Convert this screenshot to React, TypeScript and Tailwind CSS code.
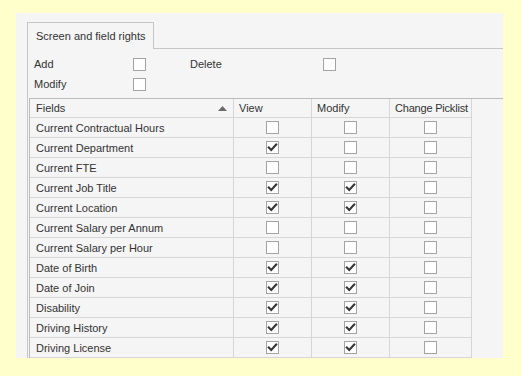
const rows: { name: string; view: boolean; modify: boolean; picklist: boolean }[] = [
  { name: 'Current Contractual Hours', view: false, modify: false, picklist: false },
  { name: 'Current Department', view: true, modify: false, picklist: false },
  { name: 'Current FTE', view: false, modify: false, picklist: false },
  { name: 'Current Job Title', view: true, modify: true, picklist: false },
  { name: 'Current Location', view: true, modify: true, picklist: false },
  { name: 'Current Salary per Annum', view: false, modify: false, picklist: false },
  { name: 'Current Salary per Hour', view: false, modify: false, picklist: false },
  { name: 'Date of Birth', view: true, modify: true, picklist: false },
  { name: 'Date of Join', view: true, modify: true, picklist: false },
  { name: 'Disability', view: true, modify: true, picklist: false },
  { name: 'Driving History', view: true, modify: true, picklist: false },
  { name: 'Driving License', view: true, modify: true, picklist: false },
];

function CheckBox({ checked = false }: { checked?: boolean }) {
  return (
    <div className="w-[13px] h-[13px] border border-[#a3a3a3] bg-white flex items-center justify-center shrink-0">
      {checked && (
        <svg width="11" height="11" viewBox="0 0 11 11" fill="none">
          <path d="M1.8 5.6L4.2 8L9.2 2.6" stroke="#363636" strokeWidth="2.1" strokeLinecap="square" />
        </svg>
      )}
    </div>
  );
}

export default function App() {
  return (
    <div
      className="w-[521px] h-[376px] bg-[#ffffcc] pt-[13px] pl-[16px] text-[11px] text-[#333333]"
      style={{ fontFamily: '"Liberation Sans", Arial, sans-serif' }}
    >
      <div className="w-[487px] h-[345px] bg-[#f5f5f5] overflow-hidden flex flex-col">
        {/* tab strip */}
        <div className="flex items-end pl-[11px] pt-[9px]">
          <div className="w-[127px] h-[27px] border border-b-0 border-[#c6c6c6] pl-[8px] pt-[1px] flex items-center">
            Screen and field rights
          </div>
          <div className="flex-1 border-b border-[#c6c6c6]" />
        </div>

        {/* tab page */}
        <div className="ml-[11px] flex-1 border-l border-[#c6c6c6] pt-[5px]">
          <div className="flex items-center h-[20px] pl-[6px]">
            <span className="w-[99px]">Add</span>
            <CheckBox />
            <span className="ml-[44px] w-[133px]">Delete</span>
            <CheckBox />
          </div>
          <div className="flex items-center h-[20px] pl-[6px]">
            <span className="w-[99px]">Modify</span>
            <CheckBox />
          </div>

          {/* grid */}
          <div className="mt-[4px] ml-[1px] border-t border-l border-[#bcbcbc]">
            <div className="flex h-[19px]">
              <div className="w-[204px] border-r border-b border-[#d6d6d6] pl-[6px] pr-[6px] pt-[1px] flex items-center justify-between">
                <span>Fields</span>
                <svg width="9" height="5" viewBox="0 0 9 5">
                  <path d="M0 5L4.5 0L9 5Z" fill="#6b6b6b" />
                </svg>
              </div>
              <div className="w-[78px] border-r border-b border-[#d6d6d6] pl-[5px] pt-[1px] flex items-center">View</div>
              <div className="w-[78px] border-r border-b border-[#d6d6d6] pl-[5px] pt-[1px] flex items-center">Modify</div>
              <div className="w-[82px] border-r border-b border-[#d6d6d6] pl-[5px] pt-[1px] flex items-center tracking-[-0.2px]">Change Picklist</div>
            </div>
            {rows.map((r) => (
              <div key={r.name} className="flex h-[20px]">
                <div className="w-[204px] border-r border-b border-[#d6d6d6] pl-[6px] pt-[1px] flex items-center">{r.name}</div>
                <div className="w-[78px] border-r border-b border-[#d6d6d6] flex items-center justify-center">
                  <CheckBox checked={r.view} />
                </div>
                <div className="w-[78px] border-r border-b border-[#d6d6d6] flex items-center justify-center">
                  <CheckBox checked={r.modify} />
                </div>
                <div className="w-[82px] border-r border-b border-[#d6d6d6] flex items-center justify-center">
                  <CheckBox checked={r.picklist} />
                </div>
              </div>
            ))}
          </div>
        </div>
      </div>
    </div>
  );
}
